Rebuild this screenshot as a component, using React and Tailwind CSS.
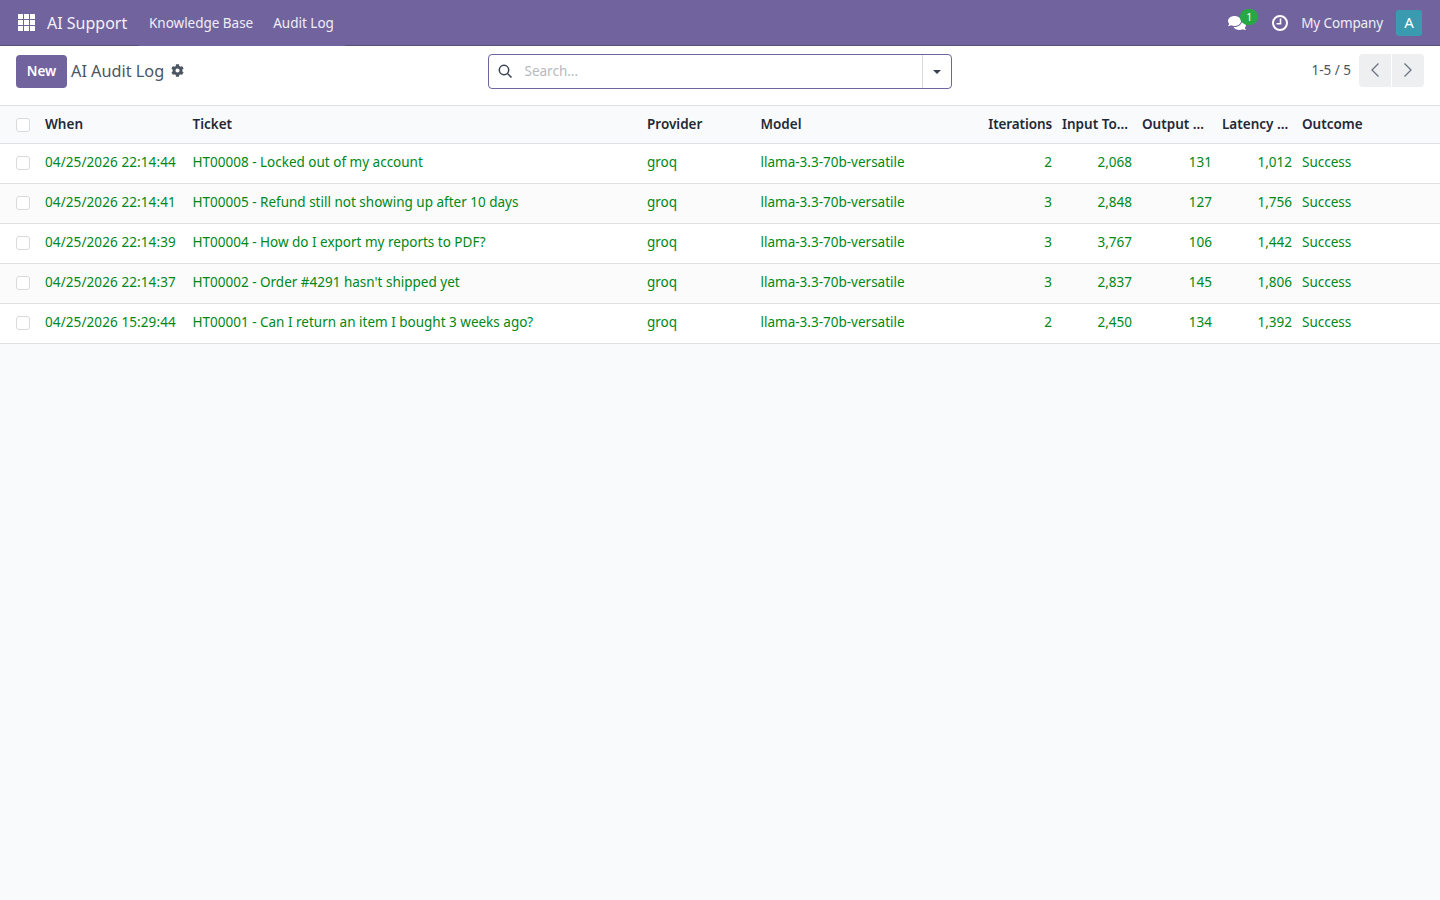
import React from 'react';
import { FaCog, FaComments } from 'react-icons/fa';

const rows = [
  ['04/25/2026 22:14:44', 'HT00008 - Locked out of my account', '2', '2,068', '131', '1,012'],
  ['04/25/2026 22:14:41', 'HT00005 - Refund still not showing up after 10 days', '3', '2,848', '127', '1,756'],
  ['04/25/2026 22:14:39', 'HT00004 - How do I export my reports to PDF?', '3', '3,767', '106', '1,442'],
  ['04/25/2026 22:14:37', "HT00002 - Order #4291 hasn't shipped yet", '3', '2,837', '145', '1,806'],
  ['04/25/2026 15:29:44', 'HT00001 - Can I return an item I bought 3 weeks ago?', '2', '2,450', '134', '1,392'],
];

const AppsIcon = () => (
  <svg width="17" height="17" viewBox="0 0 17 17" fill="#fff">
    <rect x="0" y="0" width="5" height="5" /><rect x="6" y="0" width="5" height="5" /><rect x="12" y="0" width="5" height="5" />
    <rect x="0" y="6" width="5" height="5" /><rect x="6" y="6" width="5" height="5" /><rect x="12" y="6" width="5" height="5" />
    <rect x="0" y="12" width="5" height="5" /><rect x="6" y="12" width="5" height="5" /><rect x="12" y="12" width="5" height="5" />
  </svg>
);

const ClockIcon = () => (
  <svg width="16" height="16" viewBox="0 0 16 16" fill="none" stroke="#fff" strokeWidth="2">
    <circle cx="8" cy="8" r="7" /><path d="M8.5 3.5V8.8H4.5" strokeWidth="1.6" />
  </svg>
);

const Checkbox = () => <div className="w-[14px] h-[14px] rounded-[3px] border border-[#d8dadd] bg-white ml-4" />;

const App = () => {
  return (
    <div className="min-h-screen w-full bg-[#f9fafb] text-[13.5px] text-[#374151] font-['Noto_Sans',sans-serif]">
      <nav className="h-[46px] bg-[#71639e] flex text-white">
        <div className="w-[139px] flex items-center border-b border-[#5a4f7f] pl-[18px]">
          <AppsIcon />
          <span className="ml-[12px] text-[16px] text-[#f4f2f8] whitespace-nowrap">AI Support</span>
        </div>
        <div className="w-[206px] flex items-center pl-[10px] text-[#f0eef5]">
          <span className="tracking-[-0.02px]">Knowledge Base</span>
          <span className="ml-[20px]">Audit Log</span>
        </div>
        <div className="flex-1 flex items-center justify-end border-b border-[#5a4f7f]">
          <div className="relative mr-[26px]">
            <FaComments className="w-[18px] h-[18px] text-white" />
            <span className="absolute -top-[5px] left-[12px] w-[18px] h-[16px] rounded-full bg-[#28a745] text-white text-[10.5px] leading-[16px] text-center">1</span>
          </div>
          <ClockIcon />
          <span className="ml-[13px] pt-[2px] text-[#f0eef5] tracking-[-0.13px]">My Company</span>
          <span className="ml-[13px] mr-[18px] w-[26px] h-[26px] rounded-[3px] bg-[#3a9bb0] flex items-center justify-center text-[15px] text-white">A</span>
        </div>
      </nav>

      <div className="h-[59px] pb-[9px] bg-white flex items-center relative">
        <button className="ml-4 w-[51px] h-[33px] bg-[#71639e] rounded-[4px] text-white font-semibold text-[13.5px]">New</button>
        <span className="ml-[4px] text-[16.25px] text-[#4b5563]">AI Audit Log</span>
        <FaCog className="ml-[7px] w-[13px] h-[13px] text-[#4b5563] -translate-y-px" />
        <div className="absolute left-[488px] top-[8px] w-[464px] h-[35px] border border-[#71639e] rounded-[4px] flex items-center bg-white">
          <svg className="ml-[9px] -mt-px" width="14" height="14" viewBox="0 0 14 14" fill="none" stroke="#374151" strokeWidth="1.5">
            <circle cx="6" cy="6" r="4.7" /><path d="M9.5 9.5L13.5 13.5" />
          </svg>
          <span className="ml-[12.5px] text-[#b5bac1] flex-1">Search...</span>
          <div className="w-[29px] h-full border-l border-[#d8dadd] flex items-center justify-center">
            <div className="w-0 h-0 border-x-[4.5px] border-x-transparent border-t-[4.5px] border-t-[#374151]" />
          </div>
        </div>
        <div className="ml-auto flex items-center mr-4 -mt-[2px]">
          <span className="mr-2 text-[#4b5563]">1-5 / 5</span>
          <div className="w-[32px] h-[33px] bg-[#eeeff1] rounded-l-[4px] flex items-center justify-center">
            <svg width="12" height="16" viewBox="0 0 12 16" fill="none" stroke="#6b7280" strokeWidth="1.3"><path d="M9.5 1.5L3 8l6.5 6.5" /></svg>
          </div>
          <div className="w-[32px] h-[33px] ml-px bg-[#eeeff1] rounded-r-[4px] flex items-center justify-center">
            <svg width="12" height="16" viewBox="0 0 12 16" fill="none" stroke="#6b7280" strokeWidth="1.3"><path d="M2.5 1.5L9 8l-6.5 6.5" /></svg>
          </div>
        </div>
      </div>

      <table className="w-full table-fixed border-collapse">
        <colgroup>
          <col className="w-[40px]" />
          <col className="w-[147.5px]" />
          <col className="w-[454.5px]" />
          <col className="w-[113.5px]" />
          <col className="w-[227.5px]" />
          <col className="w-[74px]" />
          <col className="w-[80px]" />
          <col className="w-[80px]" />
          <col className="w-[80px]" />
          <col />
        </colgroup>
        <thead>
          <tr className="h-[38px] bg-[#f9fafb] border-y border-[#dee0e3] text-[#1f2937] text-left">
            <th className="p-0"><Checkbox /></th>
            <th className="px-[5px] font-semibold">When</th>
            <th className="px-[5px] font-semibold">Ticket</th>
            <th className="px-[5px] font-semibold">Provider</th>
            <th className="px-[5px] font-semibold">Model</th>
            <th className="px-[5px] font-semibold text-right whitespace-nowrap tracking-[-0.1px]">Iterations</th>
            <th className="px-[5px] font-semibold whitespace-nowrap">Input To...</th>
            <th className="px-[5px] font-semibold whitespace-nowrap">Output ...</th>
            <th className="px-[5px] font-semibold whitespace-nowrap">Latency ...</th>
            <th className="px-[5px] font-semibold">Outcome</th>
          </tr>
        </thead>
        <tbody className="text-[#008818]">
          {rows.map((r, i) => (
            <tr key={r[0]} className={`h-[40px] border-b border-[#dee0e3] ${i % 2 === 0 ? 'bg-white' : 'bg-[#fbfbfb]'}`}>
              <td className="p-0 pb-[2px]"><Checkbox /></td>
              <td className="px-[5px] pb-[3px] whitespace-nowrap tracking-[0.1px]">{r[0]}</td>
              <td className="px-[5px] pb-[3px] whitespace-nowrap">{r[1]}</td>
              <td className="px-[5px] pb-[3px]">groq</td>
              <td className="px-[5px] pb-[3px] whitespace-nowrap">llama-3.3-70b-versatile</td>
              <td className="px-[5px] pb-[3px] text-right">{r[2]}</td>
              <td className="px-[5px] pb-[3px] text-right">{r[3]}</td>
              <td className="px-[5px] pb-[3px] text-right">{r[4]}</td>
              <td className="px-[5px] pb-[3px] text-right">{r[5]}</td>
              <td className="px-[5px] pb-[3px]">Success</td>
            </tr>
          ))}
        </tbody>
      </table>
    </div>
  );
};

export default App;
